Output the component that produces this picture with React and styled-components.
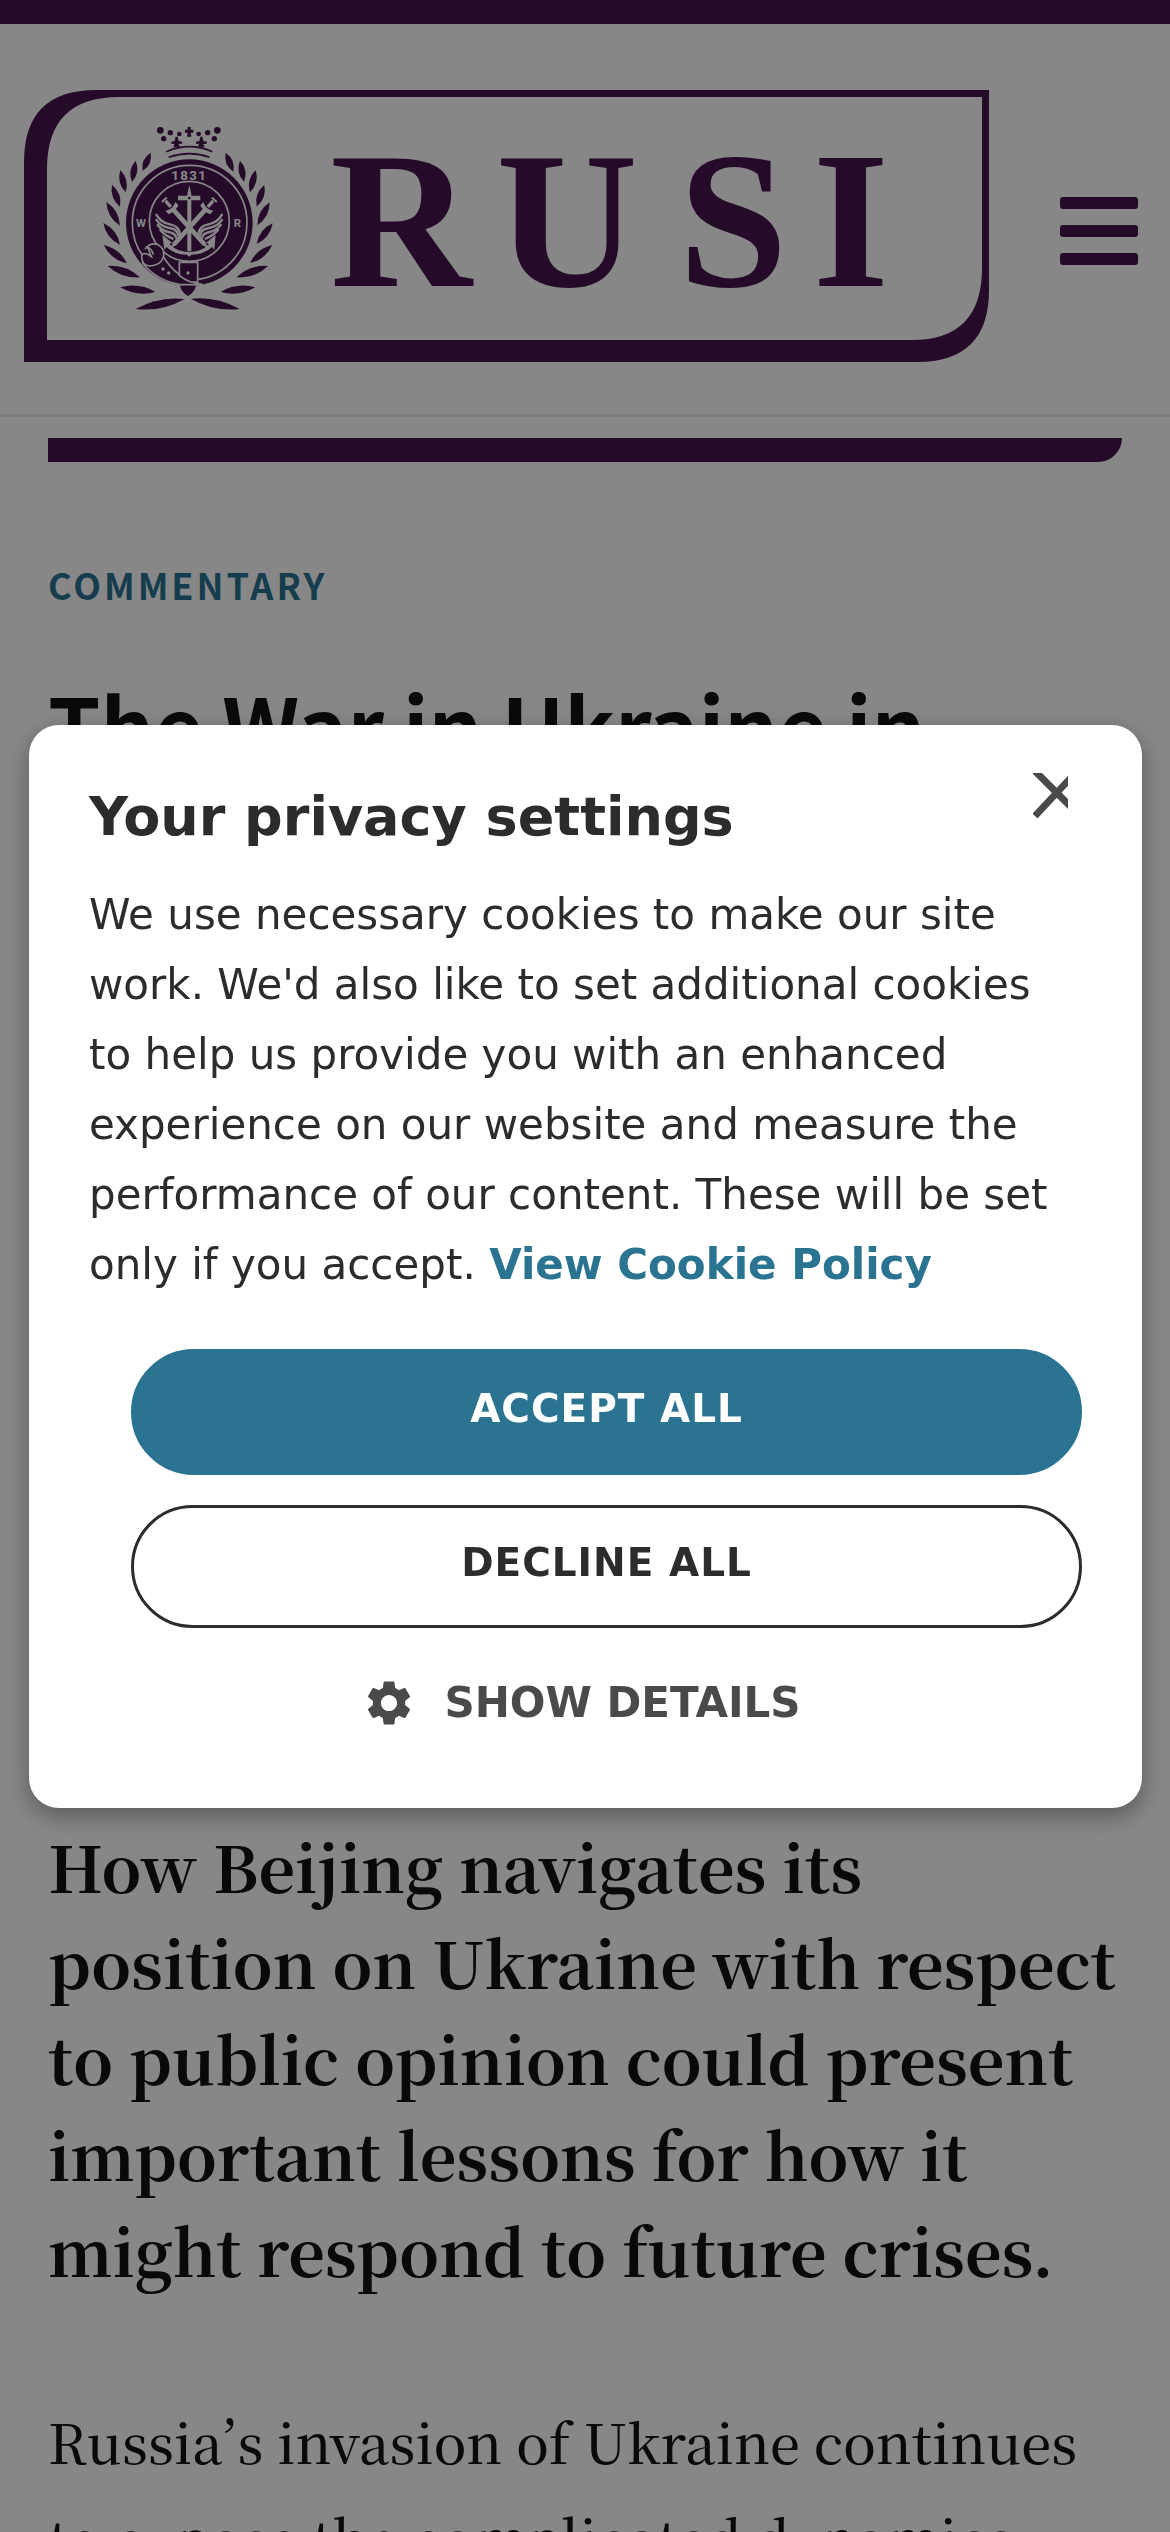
import styled, { createGlobalStyle } from 'styled-components';
import { MdSettings } from 'react-icons/md';

const purple = '#48134f';
const teal = '#2a7391';
const sans = '"Source Sans Pro", "Noto Sans CJK SC", "Open Sans", sans-serif';
const serif = '"Source Serif Pro", "Noto Serif CJK SC", "Liberation Serif", serif';

const GlobalStyle = createGlobalStyle`
  * {
    box-sizing: border-box;
  }

  body {
    margin: 0;
    background: #fff;
  }

  h1, h2, p {
    margin: 0;
  }

  button {
    padding: 0;
    border: 0;
    background: none;
    cursor: pointer;
  }
`;

const Page = styled.div`
  height: 100vh;
  overflow: hidden;
`;

const Header = styled.header`
  display: flex;
  align-items: center;
  justify-content: space-between;
  padding: 66px 32px 52px 24px;
  border-top: 24px solid ${purple};
  border-bottom: 3px solid #ececec;
`;

const HomeLink = styled.a`
  display: block;
  width: 87%;
  max-width: 965px;
`;

const LogoSvg = styled.svg`
  display: block;
  width: 100%;
  height: auto;
`;

const LogoText = styled.text`
  font-family: "Liberation Serif", serif;
  font-size: 196px;
  font-weight: bold;
  text-anchor: middle;
`;

const CrestText = styled.text`
  font-family: Roboto, sans-serif;
  font-weight: bold;
  text-anchor: middle;
  fill: #fff;
`;

const MenuButton = styled.button`
  display: flex;
  flex-direction: column;
  gap: 16px;
  width: 78px;
  padding-top: 10px;
`;

const MenuBar = styled.span`
  width: 100%;
  height: 12px;
  border-radius: 3px;
  background: ${purple};
`;

const Article = styled.main`
  padding: 21px 48px 0;
`;

const Banner = styled.div`
  height: 24px;
  border-radius: 0 0 24px 0;
  background: ${purple};
`;

const Category = styled.p`
  margin-top: 92px;
  font: 700 36px/60px ${sans};
  letter-spacing: 3px;
  color: ${teal};
`;

const Title = styled.h1`
  margin-top: 56px;
  min-height: 1147px;
  font: 700 84px/108px ${sans};
  color: #121212;
`;

const Standfirst = styled.h2`
  font: 700 64px/96px ${serif};
  color: #121212;
`;

const Paragraph = styled.p`
  margin-top: 96px;
  font: 500 54px/96px ${serif};
  font-feature-settings: "pwid";
  color: #121212;
`;

const Overlay = styled.div`
  position: fixed;
  inset: 0;
  display: flex;
  align-items: center;
  padding: 0 28px 0 29px;
  background: rgba(0, 0, 0, 0.47);
`;

const Dialog = styled.section`
  width: 100%;
  padding: 60px 60px 73px;
  border-radius: 30px;
  background: #fff;
  box-shadow: 0 8px 24px rgba(0, 0, 0, 0.35);
  font-family: "DejaVu Sans", sans-serif;
  color: #2c2c2c;
`;

const DialogHead = styled.div`
  display: flex;
  justify-content: space-between;
  align-items: flex-start;
`;

const DialogTitle = styled.h2`
  font-size: 54px;
  line-height: 64px;
`;

const CloseButton = styled.button`
  width: 35px;
  height: 45px;
  margin: -12px 14px 0 0;
  color: #4a4a4a;

  svg {
    display: block;
  }
`;

const DialogText = styled.p`
  margin-top: 31px;
  font-size: 42px;
  line-height: 70px;
`;

const PolicyLink = styled.a`
  font-weight: bold;
  color: ${teal};
  text-decoration: none;
`;

const Actions = styled.div`
  display: flex;
  flex-direction: column;
  gap: 30px;
  margin: 49px 0 43px 42px;
`;

const ActionButton = styled.button`
  height: ${(props) => (props.$primary ? 126 : 123)}px;
  padding-bottom: 6px;
  border: 3px solid ${(props) => (props.$primary ? teal : '#2c2c2c')};
  border-radius: 63px;
  background: ${(props) => (props.$primary ? teal : '#fff')};
  color: ${(props) => (props.$primary ? '#fff' : '#2c2c2c')};
  font: bold 39px/48px "DejaVu Sans", sans-serif;
  letter-spacing: 1px;
`;

const DetailsButton = styled.button`
  display: flex;
  align-items: center;
  justify-content: center;
  gap: 28px;
  width: 100%;
  padding-right: 8px;
  font: bold 42px/64px "DejaVu Sans", sans-serif;
  color: #4a4a4a;
`;

// base and tip of every laurel leaf, in crest units
const leaves = [
  [158, 183, 182, 128], [126, 216, 137, 152], [107, 247, 91, 180], [90, 290, 66, 224],
  [90, 347, 49, 276], [90, 404, 40, 339], [111, 460, 41, 405], [150, 502, 53, 468],
  [196, 546, 91, 532], [284, 567, 137, 597],
  [430, 185, 407, 128], [462, 215, 450, 152], [480, 247, 497, 181], [500, 290, 523, 225],
  [502, 346, 539, 277], [500, 402, 548, 340], [480, 459, 547, 405], [440, 502, 534, 468],
  [392, 546, 496, 532], [302, 566, 449, 597],
];

function leafPath([x1, y1, x2, y2]) {
  const length = Math.hypot(x2 - x1, y2 - y1);
  const spread = 17 + length / 20;
  const dx = ((y2 - y1) / length) * spread;
  const dy = ((x1 - x2) / length) * spread;
  const mx = (x1 + x2) / 2;
  const my = (y1 + y2) / 2;
  return `M${x1} ${y1}Q${mx + dx} ${my + dy} ${x2} ${y2}Q${mx - dx} ${my - dy} ${x1} ${y1}Z`;
}

function Sword() {
  return (
    <g>
      <path d="M-7 -74H7V70L0 84L-7 70Z" />
      <path d="M-20 -82Q0 -70 20 -82V-68Q0 -60 -20 -68Z" />
      <path d="M-5 -104H5V-80H-5Z" />
      <path d="M-10 -112H10V-106H-10Z" />
    </g>
  );
}

function Wing() {
  return (
    <g fill="none" stroke="#fff" strokeWidth="7" strokeLinecap="round">
      <path d="M199 314Q212 338 240 343T270 373" />
      <path d="M199 330Q212 350 238 354T264 376" />
      <path d="M203 345Q216 362 236 366T258 382" />
      <path d="M211 360Q224 376 248 386" />
    </g>
  );
}

function Crest() {
  return (
    <g transform="translate(66 20) scale(0.3333)">
      {leaves.map((leaf) => (
        <path key={leaf.join()} d={leafPath(leaf)} />
      ))}

      {/* crown */}
      <circle cx="211" cy="61" r="10" />
      <circle cx="241" cy="68" r="8" />
      <circle cx="268" cy="72" r="7" />
      <circle cx="326" cy="72" r="7" />
      <circle cx="353" cy="68" r="8" />
      <circle cx="382" cy="61" r="10" />
      <circle cx="221" cy="86" r="8" />
      <circle cx="373" cy="86" r="8" />
      <path d="M293 51H302V59H310V68H302L304 80H291L293 68H285V59H293Z" />
      <path d="M257 80H263L266 93L277 95L276 101L266 102L270 112H250L253 102L244 101V95L254 93Z" />
      <path d="M331 80H337L340 93L351 95L350 101L340 102L344 112H324L327 102L318 101V95L328 93Z" />
      <g fill="none" stroke={purple} strokeWidth="5">
        <path d="M229 125Q298 95 367 125" />
        <path d="M236 142Q298 120 359 142" />
      </g>

      {/* garter */}
      <circle cx="298" cy="338" r="190" />
      <g fill="none" stroke="#fff" strokeWidth="5">
        <circle cx="299" cy="338" r="172" />
        <circle cx="298" cy="334" r="120" />
      </g>
      <CrestText x="298" y="209" fontSize="40" letterSpacing="4">1831</CrestText>
      <CrestText x="153" y="350" fontSize="34">W</CrestText>
      <CrestText x="442" y="350" fontSize="34">R</CrestText>

      {/* anchor, swords and wings */}
      <g fill="#fff">
        <path d="M292 252L298 226L304 252V257H331V271H304V424H292V271H264V257H292Z" />
        <path d="M217 374L246 398L238 402Q262 426 298 426T357 402L349 398L377 374L373 420L367 411Q340 434 304 434L298 440L291 434Q254 434 229 411L223 420Z" />
        <g transform="translate(296 350) rotate(-42)"><Sword /></g>
        <g transform="translate(300 350) rotate(42)"><Sword /></g>
      </g>
      <circle cx="298" cy="264" r="4" />
      <Wing />
      <g transform="translate(595 0) scale(-1 1)"><Wing /></g>

      {/* buckle and strap */}
      <path d="M270 526H318Q316 546 294 558Q272 546 270 526Z" />
      <g fill={purple} stroke="#fff" strokeWidth="5">
        <path d="M158 460Q200 512 270 524H338Q260 510 215 432Z" />
        <path d="M268 457H323V516H302Q282 508 268 496Z" />
        <path d="M165 418Q180 396 204 404Q226 416 220 442Q210 468 180 468Q154 466 155 438Q157 428 172 432L184 440L173 412Q186 418 190 434" />
      </g>
      <g fill="#fff">
        <circle cx="219" cy="477" r="5" />
        <circle cx="236" cy="489" r="5" />
        <circle cx="294" cy="489" r="5" />
      </g>
    </g>
  );
}

function Logo() {
  return (
    <LogoSvg viewBox="0 0 965 272" fill={purple} role="img" aria-label="RUSI">
      <path
        fillRule="evenodd"
        d="M0 272V72Q0 0 72 0H965V200Q965 272 893 272ZM23 250H888Q958 250 958 178V7H95Q23 7 23 79Z"
      />
      <Crest />
      <LogoText x="377 543 709 827" y="196">RUSI</LogoText>
    </LogoSvg>
  );
}

export default function App() {
  return (
    <>
      <GlobalStyle />
      <Page>
        <Header>
          <HomeLink href="#home"><Logo /></HomeLink>
          <MenuButton type="button" aria-label="Menu">
            <MenuBar />
            <MenuBar />
            <MenuBar />
          </MenuButton>
        </Header>
        <Article>
          <Banner />
          <Category>COMMENTARY</Category>
          <Title>The War in Ukraine in</Title>
          <Standfirst>
            How Beijing navigates its<br />
            position on Ukraine with respect<br />
            to public opinion could present<br />
            important lessons for how it<br />
            might respond to future crises.
          </Standfirst>
          <Paragraph>
            Russia’s invasion of Ukraine continues<br />
            to expose the complicated dynamics
          </Paragraph>
        </Article>
      </Page>
      <Overlay>
        <Dialog role="dialog" aria-modal="true" aria-labelledby="privacy-title">
          <DialogHead>
            <DialogTitle id="privacy-title">Your privacy settings</DialogTitle>
            <CloseButton type="button" aria-label="Close">
              <svg width="35" height="45" viewBox="0 0 35 45" fill="none" stroke="currentColor" strokeWidth="7">
                <path d="M0 -4L46 42M2 43L46 -4" />
              </svg>
            </CloseButton>
          </DialogHead>
          <DialogText>
            We use necessary cookies to make our site work. We'd also like to set additional
            cookies to help us provide you with an enhanced experience on our website and measure
            the performance of our content. These will be set only if you accept.{' '}
            <PolicyLink href="#cookie-policy">View Cookie Policy</PolicyLink>
          </DialogText>
          <Actions>
            <ActionButton type="button" $primary>ACCEPT ALL</ActionButton>
            <ActionButton type="button">DECLINE ALL</ActionButton>
          </Actions>
          <DetailsButton type="button">
            <MdSettings size={54} />
            SHOW DETAILS
          </DetailsButton>
        </Dialog>
      </Overlay>
    </>
  );
}
